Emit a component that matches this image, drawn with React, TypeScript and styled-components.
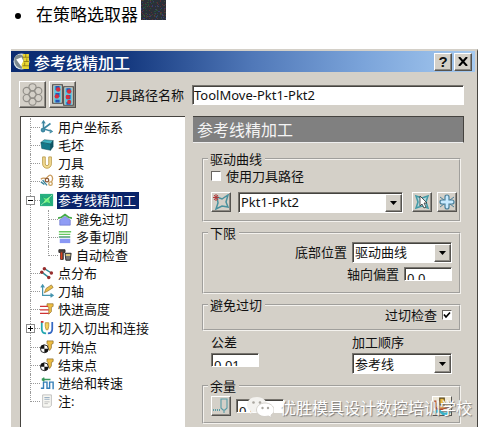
import React from "react";
import styled, { createGlobalStyle, css } from "styled-components";

const face = "#d4d0c8";
const sans = `"Noto Sans", "Noto Sans CJK SC", sans-serif`;

const GlobalStyle = createGlobalStyle`
  *, *::before, *::after { box-sizing: border-box; }
  body { margin: 0; background: #fff; color: #111; font: 13px/16px ${sans}; }
  button, input, select { font: inherit; color: inherit; margin: 0; }
`;

const raised = css`
  border: 1px solid;
  border-color: #fff #55534f #55534f #fff;
  box-shadow: inset -1px -1px #8d8a84;
`;
const sunken = css`
  border: 1px solid;
  border-color: #77746e #fff #fff #77746e;
  box-shadow: inset 1px 1px #45433f;
`;

const Page = styled.main`
  padding: 0 8px 4px 11px;
`;
const Steps = styled.ul`
  list-style: none;
  margin: 0;
  padding: 0 0 0 4px;
  height: 49px;
`;
const Step = styled.li`
  display: flex;
  align-items: flex-start;
  font: 17px/28px "Noto Sans CJK SC", sans-serif;
  color: #000;
`;
const Dot = styled.span`
  width: 6px;
  height: 6px;
  margin: 13px 15px 0 0;
  border-radius: 50%;
  background: #000;
`;
const Swatch = styled.svg`
  display: block;
  width: 25px;
  height: 20px;
  margin-left: 3px;
`;

const Dialog = styled.section`
  position: relative;
  background: ${face};
  border: solid;
  border-width: 2px 1px 0 0;
  border-color: ${face} #45433f;
  overflow: hidden;
`;
const TitleBar = styled.header`
  display: flex;
  align-items: center;
  gap: 2px;
  height: 21px;
  padding: 0 3px 0 2px;
  margin-right: 2px;
  background: linear-gradient(90deg, #0a2a70 0%, #15397f 25%, #5078b8 52%, #7ba4da 76%, #a6caf0 100%);
`;
const Title = styled.h1`
  flex: 1;
  margin: 0 0 0 2px;
  font: 500 16px/20px "Noto Sans CJK SC", sans-serif;
  color: #fff;
`;
const CaptionButton = styled.button`
  display: grid;
  place-items: center;
  width: 18px;
  height: 18px;
  padding: 0;
  background: ${face};
  font: bold 15px/15px "Liberation Sans", sans-serif;
  ${raised}
`;
const NameRow = styled.div`
  display: flex;
  align-items: center;
  gap: 3px;
  padding: 9px 13px 8px 8px;
`;
const ToolButton = styled.button<{ $size: number }>`
  display: grid;
  place-items: center;
  flex: none;
  width: ${(p) => p.$size}px;
  height: ${(p) => p.$size}px;
  padding: 0;
  background: ${face};
  ${raised}
`;
const NameLabel = styled.label`
  margin: 0 5px 0 27px;
  white-space: nowrap;
`;
const NameInput = styled.input`
  flex: 1;
  min-width: 0;
  height: 20px;
  padding: 0 1px;
  background: #fff;
  border-radius: 0;
  ${sunken}
`;
const Body = styled.div`
  display: grid;
  grid-template-columns: 165px minmax(0, 1fr);
  column-gap: 8px;
  padding: 0 13px 0 9px;
`;

const TreePanel = styled.nav`
  padding: 1px 0 0 1px;
  background: #fff;
  border: solid #45433f;
  border-width: 1px 0 0 1px;
`;
const TreeList = styled.ul`
  list-style: none;
  margin: 0;
  padding: 0;
`;
const TreeItem = styled.li<{ $tall: boolean }>`
  position: relative;
  padding-left: 18px;
  &::before {
    content: "";
    position: absolute;
    left: 8px;
    top: 0;
    bottom: 0;
    border-left: 1px dotted #999;
  }
  &::after {
    content: "";
    position: absolute;
    left: 9px;
    top: ${(p) => (p.$tall ? 10 : 9)}px;
    width: 9px;
    border-top: 1px dotted #999;
  }
  &:last-child::before { bottom: auto; height: 10px; }
`;
const TreeRow = styled.div<{ $tall: boolean }>`
  display: flex;
  align-items: center;
  gap: 3px;
  height: ${(p) => (p.$tall ? 20 : 18)}px;
`;
const TreeLabel = styled.span<{ $selected?: boolean }>`
  padding: 0 3px 0 1px;
  line-height: 17px;
  white-space: nowrap;
  ${(p) => p.$selected && css`background: #0a246a; color: #fff;`}
`;
const Expander = styled.button`
  position: absolute;
  z-index: 1;
  left: 4px;
  top: 6px;
  width: 9px;
  height: 9px;
  padding: 0;
  border: 1px solid #8b8b8b;
  background: #fff;
  display: grid;
  place-items: center;
`;

const Banner = styled.h2`
  margin: 0;
  padding: 0 4px;
  height: 27px;
  font: 16px/25px "Noto Sans CJK SC", sans-serif;
  color: #f4f4f4;
  background: #808080;
  border: solid;
  border-width: 1px 1px 1px 0;
  border-color: #45433f #45433f #eee;
`;
const Form = styled.form`
  display: flex;
  flex-direction: column;
  padding: 8px 3px 0 9px;
`;
const Group = styled.fieldset<{ $height: number }>`
  min-width: 0;
  min-height: ${(p) => p.$height}px;
  margin: 0 0 3px;
  padding: 0 2px 0 7px;
  border: 2px groove #f4f2ee;
`;
const Legend = styled.legend`
  margin-left: -3px;
  padding: 0 3px 0 2px;
  line-height: 16px;
`;
const Row = styled.div<{ $end?: boolean; $raise?: boolean; $height: number }>`
  display: flex;
  align-items: center;
  justify-content: ${(p) => (p.$end ? "flex-end" : "flex-start")};
  gap: 5px;
  height: ${(p) => p.$height}px;
  margin-top: ${(p) => (p.$raise ? -4 : 0)}px;
  padding-right: ${(p) => (p.$end ? 5 : 0)}px;
`;
const CheckLabel = styled.label`
  display: flex;
  align-items: center;
  gap: 5px;
`;
const Check = styled.input`
  appearance: none;
  width: 10px;
  height: 10px;
  background: #fff;
  border: 1px solid;
  border-color: #66635e #fff #fff #66635e;
  &:checked {
    background: #fff
      url("data:image/svg+xml,%3Csvg xmlns='http://www.w3.org/2000/svg' viewBox='0 0 8 8'%3E%3Cpath d='M1 3.5 3 6 7 1.5' fill='none' stroke='%23000' stroke-width='1.7'/%3E%3C/svg%3E");
  }
`;
const SelectBox = styled.span<{ $wide?: boolean }>`
  position: relative;
  display: block;
  height: 21px;
  background: #fff;
  ${(p) => (p.$wide ? css`flex: 1; margin: 0 4px 0 2px;` : css`width: 100px;`)}
  ${sunken}
`;
const Select = styled.select`
  appearance: none;
  display: block;
  width: 100%;
  height: 19px;
  padding: 0 18px 0 2px;
  border: 0;
  background: transparent;
`;
const Arrow = styled.span`
  position: absolute;
  right: 0;
  top: 1px;
  bottom: 0;
  width: 17px;
  display: grid;
  place-items: center;
  background: ${face};
  pointer-events: none;
  ${raised}
`;
const ShortField = styled.span`
  display: block;
  flex: none;
  width: 48px;
  height: 14px;
  overflow: hidden;
  background: #fff;
  ${sunken}
`;
const ShortInput = styled.input`
  display: block;
  width: 100%;
  height: 20px;
  padding: 1px 2px 0;
  border: 0;
  background: transparent;
`;
const Pair = styled.div`
  display: flex;
  justify-content: space-between;
  padding: 0 9px 4px 9px;
`;
const Stack = styled.div`
  display: flex;
  flex-direction: column;
  gap: 3px;
`;
const Spacer = styled.span`
  flex: 1;
`;
const Watermark = styled.div`
  position: absolute;
  right: 5px;
  bottom: 8px;
  display: flex;
  align-items: center;
  gap: 6px;
  font: 16px/24px "Noto Sans CJK SC", sans-serif;
  color: #fff;
  text-shadow: 1px 1px 1px #777777;
  white-space: nowrap;
  pointer-events: none;
`;

const glyphs: Record<string, React.ReactNode> = {
  axes: (
    <g fill="none" stroke="#3c86a0" strokeWidth="1.8">
      <path d="M4 2v8l9 3M4 10l8-6" /><path d="M2 4l2-3 2 3M11 11l3 2-3 2" strokeWidth="1.2" /><circle cx="3.5" cy="11.5" r="1.8" fill="#5aa3bd" />
    </g>
  ),
  block: (
    <g stroke="#0b4a58" strokeWidth=".6">
      <path d="M1 5l4-3 10 1-3 4z" fill="#3fb0bd" /><path d="M1 5l11 2v7L2 12z" fill="#14798a" /><path d="M12 7l3-4v7l-3 4z" fill="#0c5565" />
    </g>
  ),
  tool: <path d="M3 1v8a5 5 0 0 0 10 0V1h-3v8a2 2 0 0 1-4 0V1z" fill="#f3dc94" stroke="#b99a4a" />,
  trim: (
    <g fill="none" strokeWidth="1.5">
      <path d="M1 6c4-4 4 2 8-3s7 2 4 6" stroke="#c99a5c" /><path d="M1 9l4 3M3 7l5 6" stroke="#38839a" /><circle cx="8" cy="7" r="2" stroke="#8d5b3a" /><circle cx="12" cy="11" r="2" stroke="#c9a15c" />
    </g>
  ),
  pattern: (
    <g>
      <path d="M0 1h15v14H0z" fill="#28b080" /><path d="M2 4l5 2 5-3-1 5 2 5-5-2-5 2 2-5z" fill="#6cf07c" stroke="#18a078" /><path d="M1 14L14 2" stroke="#c8ffc0" strokeWidth=".8" />
    </g>
  ),
  gouge: (
    <g>
      <path d="M2 15V9l6-4 6 4v6z" fill="#8f9cf5" stroke="#6f78cc" strokeWidth=".8" /><path d="M0 7l4-1 4-3 4 3 4 1" fill="none" stroke="#44aa48" strokeWidth="2" />
    </g>
  ),
  multi: (
    <g strokeWidth="1.7">
      <path d="M1 2h14M1 5h13" stroke="#68c860" /><path d="M1 8h13" stroke="#4b9b73" /><path d="M2 10h12v5H2z" fill="#8a98f5" />
    </g>
  ),
  verify: (
    <g stroke="#222">
      <path d="M1 2h7v3H6v8H3V5H1z" fill="#54453d" /><path d="M4 5v8" stroke="#e0401c" strokeWidth="2" /><path d="M8 6h7l-1 8H9z" fill="#777" /><path d="M9 8h5" stroke="#ead37a" strokeWidth="2" />
    </g>
  ),
  points: (
    <g>
      <path d="M5 3l8 5M2 7l8 6" stroke="#2c8a96" strokeWidth="1.6" />
      <g fill="#982e2e"><circle cx="5" cy="3" r="2" /><circle cx="13" cy="8" r="2" /><circle cx="2" cy="7" r="2" /><circle cx="10" cy="13" r="2" /></g>
    </g>
  ),
  toolAxis: (
    <g fill="none">
      <path d="M3 2v11h11M1 4l2-3 2 3M12 11l3 2-3 2" stroke="#4594ae" strokeWidth="1.4" /><path d="M5 10l2-5 6-4 2 3-6 4z" fill="#e9bd48" stroke="#927231" strokeWidth=".8" />
    </g>
  ),
  rapid: (
    <g>
      <path d="M8 2h7v3l-2 1v5l-3 3V6L8 5z" fill="#edbd43" stroke="#927231" strokeWidth=".8" /><path d="M0 5h9M0 9h10M0 13h10" stroke="#cf3434" strokeWidth="1.6" />
    </g>
  ),
  leads: (
    <g fill="none" strokeWidth="2">
      <path d="M2 1v8q0 5 5 5" stroke="#25a8b0" /><path d="M14 1v8q0 5-5 5" stroke="#3569c4" /><path d="M1 1h3" stroke="#d23535" /><path d="M6 2h4v4L9 10H7L6 6z" fill="#f4d45f" stroke="#bb9233" strokeWidth="1" />
    </g>
  ),
  marker: (
    <g>
      <path d="M8 1h7v3l-2 1v4l-2 3-2-3V5L8 4z" fill="#edbd43" stroke="#8a6a29" strokeWidth=".8" /><circle cx="5" cy="10" r="4.5" fill="#fff" stroke="#111" /><path d="M5 10V5.500A4.500 4.500 0 0 0 .5 10zM5 10v4.500A4.500 4.500 0 0 0 9.500 10z" fill="#111" />
    </g>
  ),
  feeds: (
    <g fill="none" strokeWidth="1.6">
      <path d="M1 14h3V7h4v7h3V7h4v8" stroke="#347fb8" /><path d="M2 4h10M2 4l3-2M2 4l3 2" stroke="#36975a" />
    </g>
  ),
  note: (
    <g stroke="#aaa" strokeWidth=".8">
      <path d="M3 1h10v12l-2 2H3z" fill="#f7f7f2" /><path d="M5 4h6M5 6h6" stroke="#7391b0" /><path d="M5 9h6M5 11h4" />
    </g>
  ),
  app: (
    <g>
      <circle cx="8" cy="8" r="7.500" fill="#d9e4e8" /><path d="M2 3q6-4 9 2L8 15Q-1 12 2 3z" fill="#7d8a90" /><path d="M3 6l5-2 2 4-2 5z" fill="#fff" /><path d="M9 1h6v14H9l-1-4 2-4z" fill="#ead631" /><path d="M9 4h6M10 8h5M9 12h6M12 1v3M13 5v3M11 9v3" stroke="#7c6a15" strokeWidth=".7" />
    </g>
  ),
  rings: (
    <g fill="none" stroke="#918e88" strokeWidth=".8">
      {[[8, 3], [12, 5.5], [12, 10.5], [8, 13], [4, 10.5], [4, 5.5], [8, 8]].map(([x, y]) => <circle key={`${x}-${y}`} cx={x} cy={y} r="2.5" />)}
    </g>
  ),
  compare: (
    <g>
      <path d="M.5.5h7v13.500h-7zM8.500 2h7v13.500h-7z" fill="#d9d6cd" stroke="#444" strokeWidth=".8" />
      <path d="M4 1.500v12M12 3v12" stroke="#62c6dc" strokeWidth="5" />
      <path d="M4 1.500v12M12 3v12" stroke="#2854b4" strokeWidth="3" strokeDasharray="3 2" />
      <g fill="#d72e3c"><circle cx="4.500" cy="4" r="1.600" /><circle cx="3.500" cy="9" r="1.600" /><circle cx="12.500" cy="5.500" r="1.600" /><circle cx="11.500" cy="9.500" r="1.600" /><circle cx="12.500" cy="13" r="1.500" /></g>
    </g>
  ),
  newCurve: (
    <g fill="none">
      <path d="M4 3l5 2 6-4-2 7 2 5-6-1-6 3 2-6z" stroke="#49919e" strokeWidth="1.5" /><path d="M3 0v7M0 3.500h6M1 1l4 5M5 1L1 6" stroke="#b33b3b" />
    </g>
  ),
  pick: (
    <g>
      <path d="M2 2l6 2 6-2-2 6 2 6-6-2-6 2 2-6z" fill="#b4d6dc" stroke="#439aa6" strokeWidth="1.5" /><path d="M6 2v10l2-2 2 4 2-1-2-4h3z" fill="#fff" stroke="#333" strokeWidth=".8" />
    </g>
  ),
  plus: (
    <g stroke="#497f9a">
      <path d="M1 3l4 3M15 3l-4 3M1 13l4-3M15 13l-4-3" strokeWidth="1" />
      <path d="M8 1q2 0 2 2v3h3q2 0 2 2t-2 2h-3v3q0 2-2 2t-2-2v-3H3q-2 0-2-2t2-2h3V3q0-2 2-2z" fill="#c8eaff" strokeWidth="1.2" />
    </g>
  ),
  stock: (
    <g fill="none" stroke="#589ca6" strokeWidth="1.100">
      <path d="M8 1h6v9l-2 2h-2l-2-2zM11 12v3" /><path d="M0 12h7" strokeDasharray="1 1" strokeWidth="2" />
    </g>
  ),
  component: (
    <g>
      <path d="M0 0h16v16H0z" fill="#eee8d8" /><path d="M6 1h4v6H6z" fill="#edbd43" stroke="#5b4a22" /><path d="M2 3v6q3 4 7 1l5-1" fill="none" stroke="#a8452d" strokeWidth="2" /><path d="M4 8q4 3 9 0" fill="none" stroke="#f0a65a" strokeWidth="1.5" /><path d="M1 14q4-3 7 0t7-1" fill="none" stroke="#3ab4ca" strokeWidth="2.5" />
    </g>
  ),
};

const Icon = ({ name, size = 14 }: { name: string; size?: number }) => (
  <svg width={size} height={size} viewBox="0 0 16 16" aria-hidden="true">{glyphs[name]}</svg>
);

type Node = { icon: string; label: string; selected?: boolean; closed?: boolean; children?: Node[] };

const tree: Node[] = [
  { icon: "axes", label: "用户坐标系" },
  { icon: "block", label: "毛坯" },
  { icon: "tool", label: "刀具" },
  { icon: "trim", label: "剪裁" },
  {
    icon: "pattern",
    label: "参考线精加工",
    selected: true,
    children: [
      { icon: "gouge", label: "避免过切" },
      { icon: "multi", label: "多重切削" },
      { icon: "verify", label: "自动检查" },
    ],
  },
  { icon: "points", label: "点分布" },
  { icon: "toolAxis", label: "刀轴" },
  { icon: "rapid", label: "快进高度" },
  { icon: "leads", label: "切入切出和连接", closed: true },
  { icon: "marker", label: "开始点" },
  { icon: "marker", label: "结束点" },
  { icon: "feeds", label: "进给和转速" },
  { icon: "note", label: "注:" },
];

const Tree = ({ nodes }: { nodes: Node[] }) => (
  <TreeList>
    {nodes.map((n) => {
      const tall = Boolean(n.children || n.closed);
      return (
        <TreeItem key={n.label} $tall={tall}>
          {tall && (
            <Expander type="button" aria-label={n.label} aria-expanded={!n.closed}>
              <svg width="5" height="5" viewBox="0 0 5 5"><path d={n.closed ? "M0 2.5h5M2.500 0v5" : "M0 2.500h5"} stroke="#000" /></svg>
            </Expander>
          )}
          <TreeRow $tall={tall}>
            <Icon name={n.icon} />
            <TreeLabel $selected={n.selected}>{n.label}</TreeLabel>
          </TreeRow>
          {n.children && <Tree nodes={n.children} />}
        </TreeItem>
      );
    })}
  </TreeList>
);

const DropDown = ({ id, value, wide, label }: { id: string; value: string; wide?: boolean; label?: string }) => (
  <SelectBox $wide={wide}>
    <Select id={id} aria-label={label} defaultValue={value}><option>{value}</option></Select>
    <Arrow><svg width="7" height="4" viewBox="0 0 7 4"><path d="M0 0h7L3.500 4z" /></svg></Arrow>
  </SelectBox>
);

const NumberField = ({ id, value, label }: { id: string; value: string; label?: string }) => (
  <ShortField><ShortInput id={id} aria-label={label} defaultValue={value} /></ShortField>
);

const specks = Array.from({ length: 160 }, (_, i) => {
  const n = (i * i * 31 + i * 17) % 499;
  return { x: n % 25, y: Math.floor(n / 25), color: ["#5b2e35", "#27503a", "#343b70", "#4a4c38"][(i * 7 + n) % 4] };
});

export default function App() {
  return (
    <>
      <GlobalStyle />
      <Page>
        <Steps>
          <Step>
            <Dot />
            在策略选取器
            <Swatch viewBox="0 0 25 20" aria-hidden="true">
              <path d="M0 0h25v20H0z" fill="#2b3038" />
              {specks.map((s, i) => <rect key={i} x={s.x} y={s.y} width="1" height="1" fill={s.color} />)}
            </Swatch>
          </Step>
        </Steps>
        <Dialog>
          <TitleBar>
            <Icon name="app" size={17} />
            <Title>参考线精加工</Title>
            <CaptionButton type="button">?</CaptionButton>
            <CaptionButton type="button" aria-label="Close">
              <svg width="10" height="9" viewBox="0 0 10 9"><path d="M1 0l8 9M9 0L1 9" stroke="#000" strokeWidth="2" /></svg>
            </CaptionButton>
          </TitleBar>
          <NameRow>
            <ToolButton $size={27} type="button" aria-label="rings"><Icon name="rings" size={23} /></ToolButton>
            <ToolButton $size={27} type="button" aria-label="compare"><Icon name="compare" size={22} /></ToolButton>
            <NameLabel htmlFor="name">刀具路径名称</NameLabel>
            <NameInput id="name" defaultValue="ToolMove-Pkt1-Pkt2" />
          </NameRow>
          <Body>
            <TreePanel><Tree nodes={tree} /></TreePanel>
            <div>
              <Banner>参考线精加工</Banner>
              <Form>
                <Group $height={71}>
                  <Legend>驱动曲线</Legend>
                  <Row $height={17}>
                    <CheckLabel><Check type="checkbox" />使用刀具路径</CheckLabel>
                  </Row>
                  <Row $height={36}>
                    <ToolButton $size={20} type="button" aria-label="new"><Icon name="newCurve" size={16} /></ToolButton>
                    <DropDown id="curve" value="Pkt1-Pkt2" label="驱动曲线" wide />
                    <ToolButton $size={20} type="button" aria-label="pick"><Icon name="pick" size={16} /></ToolButton>
                    <ToolButton $size={20} type="button" aria-label="add"><Icon name="plus" size={16} /></ToolButton>
                  </Row>
                </Group>
                <Group $height={69}>
                  <Legend>下限</Legend>
                  <Row $end $height={22}>
                    <label htmlFor="bottom">底部位置</label>
                    <DropDown id="bottom" value="驱动曲线" />
                  </Row>
                  <Row $end $height={21}>
                    <label htmlFor="offset">轴向偏置</label>
                    <NumberField id="offset" value="0.0" />
                  </Row>
                </Group>
                <Group $height={34}>
                  <Legend>避免过切</Legend>
                  <Row $end $raise $height={12}>
                    <CheckLabel>过切检查<Check type="checkbox" defaultChecked /></CheckLabel>
                  </Row>
                </Group>
                <Pair>
                  <Stack>
                    <label htmlFor="tolerance">公差</label>
                    <NumberField id="tolerance" value="0.01" />
                  </Stack>
                  <Stack>
                    <label htmlFor="order">加工顺序</label>
                    <DropDown id="order" value="参考线" />
                  </Stack>
                </Pair>
                <Group $height={46}>
                  <Legend>余量</Legend>
                  <Row $end $height={24}>
                    <ToolButton $size={20} type="button" aria-label="stock"><Icon name="stock" size={16} /></ToolButton>
                    <NumberField id="stock" value="0.0" label="余量" />
                    <Spacer />
                    <ToolButton $size={20} type="button" aria-label="component"><Icon name="component" size={18} /></ToolButton>
                  </Row>
                </Group>
              </Form>
            </div>
          </Body>
          <Watermark>
            <svg width="27" height="22" viewBox="0 0 27 22" aria-hidden="true">
              <path d="M10 1C4 1 0 4.500 0 9c0 2.500 1.500 4.500 3.500 6L3 18l3.500-2 3.500.5C16 16.500 20 13 20 9s-4-8-10-8z" fill="#f3f2ef" />
              <path d="M18 7c5 0 9 3 9 7 0 2-1 4-3 5l.5 2.500-3-1.500-3.500.5c-5 0-8.500-3-8.500-6.500S13 7 18 7z" fill="#fff" stroke="#cbc8c1" strokeWidth=".8" />
              <g fill="#aaa7a0"><circle cx="6.500" cy="6.500" r="1.300" /><circle cx="13" cy="6.500" r="1.300" /><circle cx="15.500" cy="12" r="1.200" /><circle cx="21" cy="12" r="1.200" /></g>
            </svg>
            优胜模具设计数控培训学校
          </Watermark>
        </Dialog>
      </Page>
    </>
  );
}
